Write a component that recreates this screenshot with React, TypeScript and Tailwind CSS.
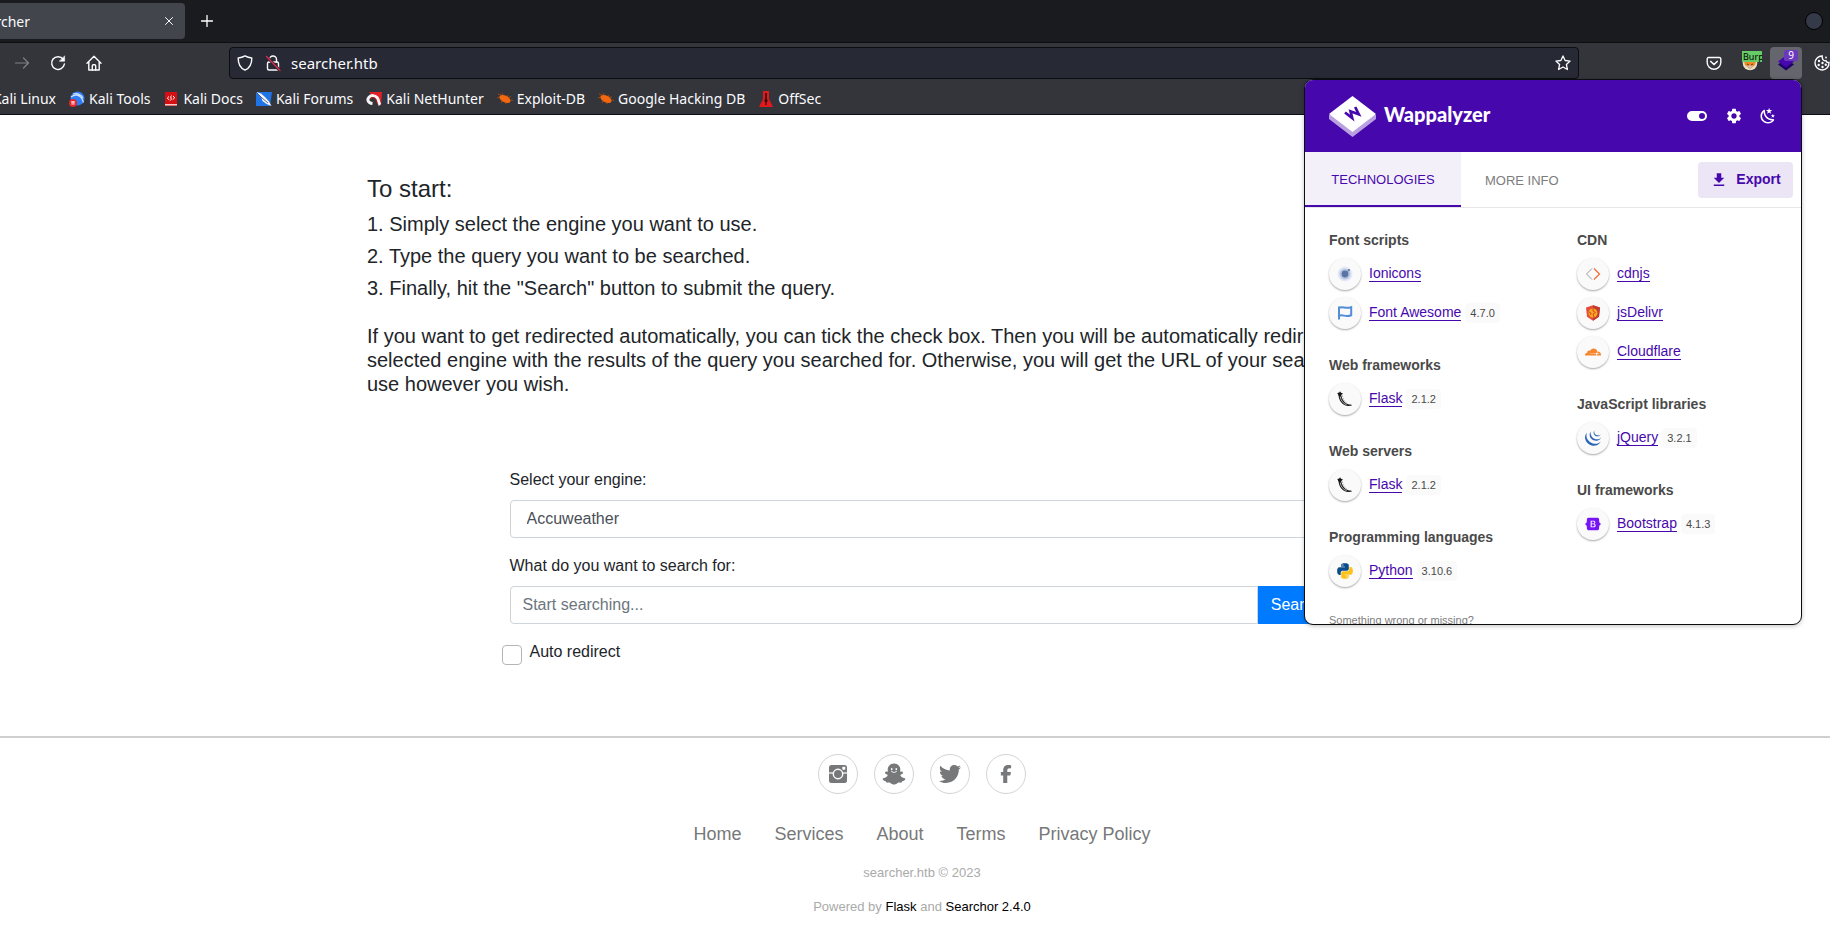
import type { ReactNode } from 'react';
import { FaBootstrap, FaFacebookF } from 'react-icons/fa6';
import { IoLogoSnapchat, IoLogoTwitter } from 'react-icons/io';
import { SiCloudflare, SiJquery } from 'react-icons/si';
import { MdSettings } from 'react-icons/md';

/* ---------- browser icons ---------- */

const stroke = { fill: 'none', stroke: 'currentColor', strokeLinecap: 'round', strokeLinejoin: 'round' } as const;

function ForwardIcon() {
  return (
    <svg viewBox="0 0 16 16" className="size-4" {...stroke} strokeWidth="1.2">
      <path d="M1.5 8h13M9.5 3l5 5-5 5" />
    </svg>
  );
}

function ReloadIcon() {
  return (
    <svg viewBox="0 0 16 16" className="size-4" {...stroke} strokeWidth="1.5">
      <path d="M13.2 4.2A6.4 6.4 0 1 0 14.4 9" />
      <path d="M14.6 1.2v5h-5z" fill="currentColor" strokeWidth="0.6" />
    </svg>
  );
}

function HomeIcon() {
  return (
    <svg viewBox="0 0 16 16" className="size-4" {...stroke} strokeWidth="1.4">
      <path d="M1 8.2 8 1.2l7 7M2.8 7v8h10.4V7" />
      <path d="M6.3 15v-4.2a1 1 0 0 1 1-1h1.4a1 1 0 0 1 1 1V15" />
    </svg>
  );
}

function ShieldIcon() {
  return (
    <svg viewBox="0 0 16 16" className="size-4" {...stroke} strokeWidth="1.4">
      <path d="M8 .9c2 1.2 4.200 1.900 6.800 2.100.1 5.400-1.900 10-6.800 12.200C3.100 13 1.100 8.400 1.200 3 3.800 2.800 6 2.100 8 .9z" />
    </svg>
  );
}

function InsecureIcon() {
  return (
    <svg viewBox="0 0 16 16" className="size-4" {...stroke} strokeWidth="1.4">
      <path d="M4.500 7V4.500a3.500 3.500 0 0 1 7 0V7" />
      <rect x="2.500" y="7" width="11" height="8" rx="1.500" />
      <path d="M1.500 1.500l13.500 14" stroke="#272935" strokeWidth="3" />
      <path d="M1.500 1.500l13.500 14" stroke="#e22850" strokeWidth="1.300" />
    </svg>
  );
}

function StarIcon() {
  return (
    <svg viewBox="0 0 16 16" className="size-4" {...stroke} strokeWidth="1.300">
      <path d="M8 .9l2.100 4.600 5 .6-3.700 3.400 1 5L8 12l-4.400 2.500 1-5L.9 6.100l5-.6z" />
    </svg>
  );
}

function PocketIcon() {
  return (
    <svg viewBox="0 0 16 16" className="size-4" {...stroke} strokeWidth="1.400">
      <path d="M2.500 2.500h11a1.300 1.300 0 0 1 1.300 1.300v3.700a6.800 6.800 0 0 1-13.600 0V3.800a1.300 1.300 0 0 1 1.300-1.300z" />
      <path d="M4.800 6.500L8 9.500l3.200-3" strokeWidth="1.700" />
    </svg>
  );
}

function FoxIcon() {
  return (
    <svg viewBox="0 0 16 16" className="size-4">
      <circle cx="8" cy="8" r="7.300" fill="#eadfc8" />
      <path d="M2 6h12l-1 4-5 4-5-4z" fill="#f08a24" />
      <path d="M4.500 10.500h7L8 13.500z" fill="#c9c4b8" />
      <path d="M5 9l2 1M11 9l-2 1" stroke="#6b3b10" strokeWidth="1" />
    </svg>
  );
}

function StackIcon() {
  return (
    <svg viewBox="0 0 16 16" className="size-4">
      <path d="M8 3.500l8 6-8 6-8-6z" fill="#1e0066" />
      <path d="M8 .5l8 6-8 6-8-6z" fill="#4608ad" />
    </svg>
  );
}

function CookieIcon() {
  return (
    <svg viewBox="0 0 16 16" className="size-4" fill="currentColor">
      <path
        d="M8.200 1a7 7 0 1 0 6.800 6.500 2.600 2.600 0 0 1-3-1.800 2.800 2.800 0 0 1-3.600-2.600A3 3 0 0 1 8.200 1z"
        fill="none"
        stroke="currentColor"
        strokeWidth="1.400"
      />
      <circle cx="5" cy="6" r="1.200" />
      <circle cx="8.500" cy="8" r="1.200" />
      <circle cx="4.700" cy="10" r="1.200" />
      <circle cx="8.500" cy="12" r="1.200" />
      <circle cx="11.800" cy="9.800" r="1.200" />
      <circle cx="12" cy="2.500" r=".9" />
    </svg>
  );
}

/* ---------- bookmark icons ---------- */

function ToolsMark() {
  return (
    <svg viewBox="0 0 16 16" className="size-4">
      <circle cx="8.500" cy="7.500" r="7" fill="#2f7df6" />
      <path d="M2 6c4-3 8-2 10 .5 1.500 1.500 2 3 2.500 5M4 3c4-1 8 1 10 4" stroke="#cfe2ff" strokeWidth="1.200" fill="none" />
      <circle cx="4" cy="12" r="4" fill="#e3262b" />
      <path d="M2.200 10.800h3.600M3.100 10.800v3M4.900 10.800v3" stroke="#fff" strokeWidth=".9" />
    </svg>
  );
}

function DocsMark() {
  return (
    <svg viewBox="0 0 16 16" className="size-4">
      <path d="M2 1h12v14H2z" fill="#d50f12" />
      <path d="M2 13h12v1.500H2z" fill="#f4c9c9" />
      <path d="M6 5.500L4.300 7.200l2 1.800M10 5l1.700 1.800-2 1.800M8.500 4.500c-2 1.500 1 3.500-1 5" stroke="#fff" strokeWidth="1" fill="none" />
    </svg>
  );
}

function ForumsMark() {
  return (
    <svg viewBox="0 0 16 16" className="size-4">
      <path d="M0 1h16l-2 14H0z" fill="#1f74e8" />
      <path d="M0 1l5 1.500L9 6l4 4.500 2.500 4.500-5-2-4-3-1-3z" fill="#f2f6fc" />
      <path d="M0 1l6 6 6 5" stroke="#1b2a44" strokeWidth=".7" fill="none" />
    </svg>
  );
}

function HunterMark() {
  return (
    <svg viewBox="0 0 16 16" className="size-4">
      <path d="M3 1h13l-1 13z" fill="#e31e26" />
      <path
        d="M6.500 12.500C2 12 .8 8.500 3 6.200s6-2 8 .3 1.200 5 3 7.500"
        stroke="#f5f5f5"
        strokeWidth="3"
        fill="none"
      />
      <path d="M4 8c2-2.200 5-1.500 6 .5s.8 3.500 2 5" stroke="#d11" strokeWidth=".9" fill="none" />
    </svg>
  );
}

function BugMark() {
  return (
    <svg viewBox="0 0 16 16" className="size-4">
      <path d="M1 3l3 1M5 2l1 2M0 7l3-1M10 4l1 2M12 6l2 0M5 10l-1 2M9 12v1M14 9l2 .5" stroke="#a8480f" strokeWidth=".9" />
      <ellipse cx="8" cy="8" rx="6" ry="3.300" transform="rotate(27 8 8)" fill="#f2670f" />
    </svg>
  );
}

function OffSecMark() {
  return (
    <svg viewBox="0 0 16 16" className="size-4">
      <path d="M5 0h6v8l4 8H1l4-8z" fill="#e0191d" />
      <path d="M7.200 2h1.600v6l1 2-1.200 1V14H7.400v-3l-1.200-1 1-2z" fill="#2a0b0d" />
    </svg>
  );
}

/* ---------- technology icons ---------- */

function IoniconsMark() {
  return (
    <svg viewBox="0 0 16 16" className="size-4">
      <circle cx="8" cy="8" r="7.500" fill="#e3e9f6" />
      <circle cx="8" cy="8" r="5.500" fill="#b9c6e0" />
      <circle cx="8" cy="8" r="3.400" fill="#5a74a6" />
      <circle cx="11.800" cy="4.200" r="1.100" fill="#5a74a6" />
    </svg>
  );
}

function FlagMark() {
  return (
    <svg viewBox="0 0 16 16" className="size-4">
      <path
        d="M2 1.500v13M2 2.800c4-1.800 6 1.400 12.200-.6v8c-6 2.400-8-1.200-12.200.6"
        fill="none"
        stroke="#538dd7"
        strokeWidth="2"
      />
    </svg>
  );
}

function FlaskMark() {
  return (
    <svg viewBox="0 0 16 16" className="size-4">
      <path d="M.3 2l2-.4L3 .2l1 1.500 2 .8-1.300 1.300L1.500 4.500z" fill="#161616" />
      <path d="M1.500 4c.4 6 4 10.500 10 11l3.500-.6-1-.8C9 13.500 5.500 10.500 4.200 4z" fill="#161616" />
      <path d="M3.200 5.500c.6 4 2.800 7 6.500 8.300" stroke="#fafafa" strokeWidth=".7" fill="none" />
      <path d="M5.500 4.500c.2 3.500 2.500 7 5.500 8.200" stroke="#9a9a9a" strokeWidth=".8" strokeDasharray="1.500 1" fill="none" />
    </svg>
  );
}

function PythonMark() {
  return (
    <svg viewBox="0 0 32 32" className="size-[18px]">
      <path
        fill="#0b4d8c"
        d="M15.885 2.100c-7.100 0-6.651 3.070-6.651 3.070v3.190h6.752v1H6.545S2 8.800 2 16.005s4.013 6.912 4.013 6.912H8.330v-3.361s-.13-4.013 3.900-4.013h6.762s3.772.06 3.772-3.652V5.800s.572-3.712-6.842-3.712zm-3.732 2.137a1.214 1.214 0 1 1-1.183 1.244v-.02a1.214 1.214 0 0 1 1.214-1.214z"
      />
      <path
        fill="#ffc21a"
        d="M16.085 29.910c7.100 0 6.651-3.080 6.651-3.080v-3.180h-6.751v-1h9.470S30 23.158 30 15.995s-4.013-6.912-4.013-6.912H23.640V12.400s.13 4.013-3.900 4.013h-6.765S9.200 16.356 9.200 20.068V26.200s-.572 3.712 6.842 3.712h.04zm3.732-2.147A1.214 1.214 0 1 1 21 26.519v.03a1.214 1.214 0 0 1-1.214 1.214z"
      />
    </svg>
  );
}

function CdnjsMark() {
  return (
    <svg viewBox="0 0 16 16" className="size-4" fill="none" strokeWidth="1">
      <path d="M7 2.500L1.500 8 7 13.500" stroke="#9a9a9a" />
      <path d="M9 2.500L14.500 8 9 13.500" stroke="#f0713a" strokeWidth="1.300" />
    </svg>
  );
}

function JsDelivrMark() {
  return (
    <svg viewBox="0 0 16 16" className="size-4">
      <path d="M8 .3l7 2.200-1 9.300-6 4-6-4-1-9.300z" fill="#e44e3c" />
      <path d="M8 .3l7 2.200-1 9.300-6 4z" fill="#c23a30" />
      <circle cx="8" cy="8" r="4.500" fill="#f6a91c" />
      <path d="M8 3.500v2.500l2.500 1.500L8 9l1 3M4 7l2 1-.5 2" stroke="#d8472f" strokeWidth="1" fill="none" />
    </svg>
  );
}

function BootstrapMark() {
  return (
    <span className="relative flex size-4 items-center justify-center">
      <span className="absolute size-2 bg-white" />
      <FaBootstrap className="relative size-[18px] text-[#7714f5]" />
    </span>
  );
}

/* ---------- browser chrome ---------- */

type Bookmark = { label: string; icon: ReactNode };

const bookmarks: Bookmark[] = [
  { label: 'Kali Tools', icon: <ToolsMark /> },
  { label: 'Kali Docs', icon: <DocsMark /> },
  { label: 'Kali Forums', icon: <ForumsMark /> },
  { label: 'Kali NetHunter', icon: <HunterMark /> },
  { label: 'Exploit-DB', icon: <BugMark /> },
  { label: 'Google Hacking DB', icon: <BugMark /> },
  { label: 'OffSec', icon: <OffSecMark /> },
];

function TabStrip() {
  return (
    <div className="flex h-[43px] items-center justify-between overflow-hidden border-b border-[#0c0d10] bg-[#1a1b1f]">
      <div className="flex items-center">
        <div className="flex h-9 w-[185px] items-center justify-between rounded-r bg-[#42454c] pr-2">
          <span className="flex w-[30px] justify-end overflow-hidden text-[14px] text-[#fbfbfe]">Searcher</span>
          <button type="button" aria-label="Close tab" className="flex size-4 items-center justify-center">
            <svg viewBox="0 0 8 8" className="size-2" {...stroke} strokeWidth="1">
              <path d="M.5.5l7 7M7.500.5l-7 7" />
            </svg>
          </button>
        </div>
        <button type="button" aria-label="New tab" className="ml-4 text-white">
          <svg viewBox="0 0 12 12" className="size-3" {...stroke} strokeWidth="1.300">
            <path d="M6 .5v11M.5 6h11" />
          </svg>
        </button>
      </div>
      <button
        type="button"
        aria-label="Minimize"
        className="mr-[7px] size-[18px] rounded-full border border-black bg-[#343a47]"
      />
    </div>
  );
}

function Toolbar() {
  return (
    <div className="flex h-9 items-center pt-1">
      <div className="flex w-[229px] items-center gap-5 pl-[14px]">
        <button type="button" aria-label="Forward" className="text-[#808188]">
          <ForwardIcon />
        </button>
        <button type="button" aria-label="Reload">
          <ReloadIcon />
        </button>
        <button type="button" aria-label="Home">
          <HomeIcon />
        </button>
      </div>
      <div className="flex h-8 flex-1 items-center rounded border border-[#0c0d10] bg-[#272935] px-[7px]">
        <ShieldIcon />
        <span className="ml-3">
          <InsecureIcon />
        </span>
        <input
          aria-label="Address"
          defaultValue="searcher.htb"
          className="ml-2.5 min-w-0 flex-1 bg-transparent text-[15px] text-[#fbfbfe] outline-none"
        />
        <button type="button" aria-label="Bookmark this page">
          <StarIcon />
        </button>
      </div>
      <div className="flex w-[251px] items-center justify-end">
        <button type="button" aria-label="Save to Pocket" className="mr-5">
          <PocketIcon />
        </button>
        <button type="button" aria-label="Burp proxy" className="relative mr-3">
          <FoxIcon />
          <span className="absolute -top-1 left-0 h-[11px] w-5 overflow-hidden bg-[#66cc66] pl-px text-left text-[9px]/[11px] text-black">
            Burp
          </span>
        </button>
        <button
          type="button"
          aria-label="Wappalyzer"
          className="relative mr-3 flex size-8 items-center justify-center rounded bg-[#65666d]"
        >
          <StackIcon />
          <span className="absolute top-[3px] right-1 h-[11px] w-[14px] rounded-[2px] bg-[#6b39bd] text-center text-[10px]/[11px] text-white">
            9
          </span>
        </button>
        <CookieIcon />
      </div>
    </div>
  );
}

function BookmarksBar() {
  return (
    <nav aria-label="Bookmarks" className="flex h-9 items-center gap-[13px] border-b border-[#0c0d10] pt-1 text-[14px]">
      <a href="#kali-linux" className="flex w-14 justify-end overflow-hidden whitespace-nowrap">
        Kali Linux
      </a>
      {bookmarks.map((b) => (
        <a key={b.label} href={`#${b.label}`} className="flex items-center gap-1 whitespace-nowrap">
          {b.icon}
          {b.label}
        </a>
      ))}
    </nav>
  );
}

/* ---------- extension panel ---------- */

type Tech = { name: string; version?: string; icon: ReactNode };
type Category = { title: string; items: Tech[] };

const leftColumn: Category[] = [
  {
    title: 'Font scripts',
    items: [
      { name: 'Ionicons', icon: <IoniconsMark /> },
      { name: 'Font Awesome', version: '4.7.0', icon: <FlagMark /> },
    ],
  },
  { title: 'Web frameworks', items: [{ name: 'Flask', version: '2.1.2', icon: <FlaskMark /> }] },
  { title: 'Web servers', items: [{ name: 'Flask', version: '2.1.2', icon: <FlaskMark /> }] },
  { title: 'Programming languages', items: [{ name: 'Python', version: '3.10.6', icon: <PythonMark /> }] },
];

const rightColumn: Category[] = [
  {
    title: 'CDN',
    items: [
      { name: 'cdnjs', icon: <CdnjsMark /> },
      { name: 'jsDelivr', icon: <JsDelivrMark /> },
      { name: 'Cloudflare', icon: <SiCloudflare className="size-4 text-[#f5862b]" /> },
    ],
  },
  {
    title: 'JavaScript libraries',
    items: [{ name: 'jQuery', version: '3.2.1', icon: <SiJquery className="size-4 text-[#2b65b5]" /> }],
  },
  {
    title: 'UI frameworks',
    items: [{ name: 'Bootstrap', version: '4.1.3', icon: <BootstrapMark /> }],
  },
];

function CategoryList({ categories }: { categories: Category[] }) {
  return (
    <div className="w-[248px] shrink-0">
      {categories.map((c) => (
        <section key={c.title} className="mb-[23px]">
          <h3 className="mb-1 text-[14px]/5 font-bold text-[#4a4a4a]">{c.title}</h3>
          {c.items.map((t) => (
            <div key={t.name} className="flex h-[39px] items-center">
              <span className="flex size-8 items-center justify-center rounded-full bg-[#fafafa] shadow-[0_1px_2px_rgba(0,0,0,0.35)]">
                {t.icon}
              </span>
              <a
                href={`#${t.name}`}
                className="ml-2 border-b border-[#4608ad] text-[14px]/[15px] text-[#4608ad]"
              >
                {t.name}
              </a>
              {t.version && (
                <span className="ml-1 rounded bg-[#fafafa] px-[5px] text-[11px]/5 text-[#4a4a4a]">{t.version}</span>
              )}
            </div>
          ))}
        </section>
      ))}
    </div>
  );
}

function ExtensionPanel() {
  return (
    <aside className="absolute top-[79px] right-7 h-[546px] w-[498px] overflow-hidden rounded-[9px] border border-[#0c0d10] bg-white font-['Liberation_Sans',sans-serif] shadow-[0_1px_4px_rgba(0,0,0,0.25)]">
      <header className="flex h-[72px] items-center justify-between bg-[#4608ad] pr-6 pl-6 text-white">
        <div className="flex items-center gap-2">
          <svg viewBox="0 0 47 41" className="h-[41px] w-[47px]">
            <path d="M0 19v4l23.500 18L47 23v-4z" fill="#b9a0e0" />
            <path d="M23.500 0L47 18 23.500 36 0 18z" fill="#fff" />
            <path d="M16 16.500l7.200 5.500-1.700-6.700 8.300 3-3.600-7.300" fill="none" stroke="#4608ad" strokeWidth="2.700" />
          </svg>
          <span className="pb-1 font-['Lato',sans-serif] text-[20px] font-black">Wappalyzer</span>
        </div>
        <div className="flex items-center gap-4">
          <button type="button" aria-label="Enable">
            <svg viewBox="0 0 24 24" className="size-6" fill="currentColor">
              <path
                fillRule="evenodd"
                d="M17 7H7a5 5 0 0 0 0 10h10a5 5 0 0 0 0-10m0 8a3 3 0 1 1 0-6 3 3 0 0 1 0 6"
              />
            </svg>
          </button>
          <button type="button" aria-label="Settings">
            <MdSettings className="size-[18px]" />
          </button>
          <button type="button" aria-label="Dark mode">
            <svg viewBox="0 0 24 24" className="size-[18px]" fill="currentColor">
              <path d="M17.750 4.090L15.220 6.030L16.130 9.090L13.500 7.280L10.870 9.090L11.780 6.030L9.250 4.090L12.440 4L13.500 1L14.560 4L17.750 4.090M21.250 11L19.610 12.250L20.200 14.230L18.500 13.060L16.800 14.230L17.390 12.250L15.750 11L17.810 10.950L18.500 9L19.190 10.950L21.250 11M18.970 15.950C19.800 15.870 20.690 17.050 20.160 17.800C19.840 18.250 19.500 18.670 19.080 19.070C15.170 23 8.840 23 4.940 19.070C1.030 15.170 1.030 8.830 4.940 4.930C5.340 4.530 5.760 4.170 6.210 3.850C6.960 3.320 8.140 4.210 8.060 5.040C7.790 7.900 8.750 10.870 10.950 13.060C13.140 15.260 16.100 16.220 18.970 15.950M17.330 17.970C14.500 17.810 11.700 16.640 9.530 14.500C7.360 12.310 6.200 9.500 6.040 6.680C3.230 9.820 3.340 14.640 6.350 17.660C9.370 20.670 14.190 20.780 17.330 17.970Z" />
            </svg>
          </button>
        </div>
      </header>
      <div className="flex h-14 items-center border-b border-[#e6e6e6] pr-2">
        <button
          type="button"
          className="h-full w-[156px] border-b-2 border-[#4608ad] bg-[#f4f0fa] pt-0.5 text-[13px] text-[#4608ad]"
        >
          TECHNOLOGIES
        </button>
        <button type="button" className="px-6 pt-0.5 text-[13px] text-[#7d7d7d]">
          MORE INFO
        </button>
        <button
          type="button"
          className="ml-auto flex h-9 w-[95px] items-center justify-center gap-2 rounded bg-[#ece5f5] text-[14px] font-bold text-[#4608ad]"
        >
          <svg viewBox="0 0 24 24" className="size-[18px]" fill="currentColor">
            <path d="M5 20h14v-2H5zM19 9h-4V3H9v6H5l7 7z" />
          </svg>
          Export
        </button>
      </div>
      <div className="flex pt-[22px] pl-6">
        <CategoryList categories={leftColumn} />
        <CategoryList categories={rightColumn} />
      </div>
      <p className="pl-6 text-[11px]/[14px] text-[#7d7d7d]">Something wrong or missing?</p>
    </aside>
  );
}

/* ---------- web page ---------- */

const steps = [
  '1. Simply select the engine you want to use.',
  '2. Type the query you want to be searched.',
  '3. Finally, hit the "Search" button to submit the query.',
];

const footerLinks = ['Home', 'Services', 'About', 'Terms', 'Privacy Policy'];

const socials = [
  {
    label: 'Instagram',
    icon: (
      <svg viewBox="0 0 18 18" className="size-[18px]">
        <rect width="18" height="18" rx="2.500" fill="currentColor" />
        <path d="M0 8h18" stroke="#fff" strokeWidth="1.200" />
        <circle cx="9" cy="9" r="4.700" fill="currentColor" stroke="#fff" strokeWidth="1.400" />
        <rect x="13.300" y="1.700" width="3" height="3" rx=".8" fill="#fff" />
      </svg>
    ),
  },
  { label: 'Snapchat', icon: <IoLogoSnapchat className="size-6" /> },
  { label: 'Twitter', icon: <IoLogoTwitter className="size-6" /> },
  { label: 'Facebook', icon: <FaFacebookF className="size-[18px]" /> },
];

function Instructions() {
  return (
    <section className="mx-auto w-full max-w-[1110px] pt-[60px]">
      <h4 className="mb-[9px] text-[24px]/7">To start:</h4>
      {steps.map((s) => (
        <h5 key={s} className="mb-2 text-[20px]/6">
          {s}
        </h5>
      ))}
      <p className="pt-4 text-[20px]/6">
        If you want to get redirected automatically, you can tick the check box. Then you will be automatically
        redirected to the selected engine with the results of the query you searched for. Otherwise, you will get the
        URL of your search, which you can use however you wish.
      </p>
    </section>
  );
}

function SearchForm() {
  return (
    <form className="mx-auto mt-[72px] w-full max-w-[825px] text-[16px]/6" onSubmit={(e) => e.preventDefault()}>
      <label htmlFor="engine" className="mb-2 block">
        Select your engine:
      </label>
      <select
        id="engine"
        className="block h-[38px] w-full appearance-none rounded border border-[#ced4da] bg-white px-4 text-[#495057]"
      >
        <option>Accuweather</option>
      </select>
      <label htmlFor="query" className="mt-4 mb-2 block">
        What do you want to search for:
      </label>
      <div className="flex h-[38px]">
        <input
          id="query"
          placeholder="Start searching..."
          className="min-w-0 flex-1 rounded-l border border-[#ced4da] px-3 placeholder:text-[#6c757d]"
        />
        <button type="submit" className="rounded-r bg-[#007bff] px-[13px] text-white">
          Search
        </button>
      </div>
      <div className="mt-4 -ml-2 flex items-start gap-2">
        <input
          id="redirect"
          type="checkbox"
          className="mt-[5px] size-5 appearance-none rounded border border-[#b5b5b5] bg-white"
        />
        <label htmlFor="redirect">Auto redirect</label>
      </div>
    </form>
  );
}

function PageFooter() {
  return (
    <footer className="mt-[71px] border-t-2 border-[#d0d0d0] pt-4 pl-[14px]">
      <div className="flex justify-center gap-4 text-[#77787a]">
        {socials.map((s) => (
          <a
            key={s.label}
            href={`#${s.label}`}
            aria-label={s.label}
            className="flex size-10 items-center justify-center rounded-full border border-[#d4d4d4]"
          >
            {s.icon}
          </a>
        ))}
      </div>
      <nav aria-label="Footer" className="mt-[26px] flex justify-center gap-[33px] text-[18px]/7 text-[#777879]">
        {footerLinks.map((l) => (
          <a key={l} href={`#${l}`}>
            {l}
          </a>
        ))}
      </nav>
      <p className="mt-[15px] text-center text-[13px]/5 text-[#aaaaaa]">searcher.htb © 2023</p>
      <p className="mt-[14px] pb-2 text-center text-[13px]/5 text-[#aaaaaa]">
        Powered by{' '}
        <a href="#flask" className="text-black">
          Flask
        </a>{' '}
        and{' '}
        <a href="#searchor" className="text-black">
          Searchor 2.4.0
        </a>
      </p>
    </footer>
  );
}

export default function App() {
  return (
    <div className="relative min-h-screen overflow-hidden bg-white">
      <header className="bg-[#33353b] font-['Noto_Sans',sans-serif] text-[#fbfbfe]">
        <TabStrip />
        <Toolbar />
        <BookmarksBar />
      </header>
      <main className="font-['Liberation_Sans',sans-serif] text-[#212529]">
        <div className="pl-[14px]">
          <Instructions />
          <SearchForm />
        </div>
        <PageFooter />
      </main>
      <ExtensionPanel />
    </div>
  );
}
